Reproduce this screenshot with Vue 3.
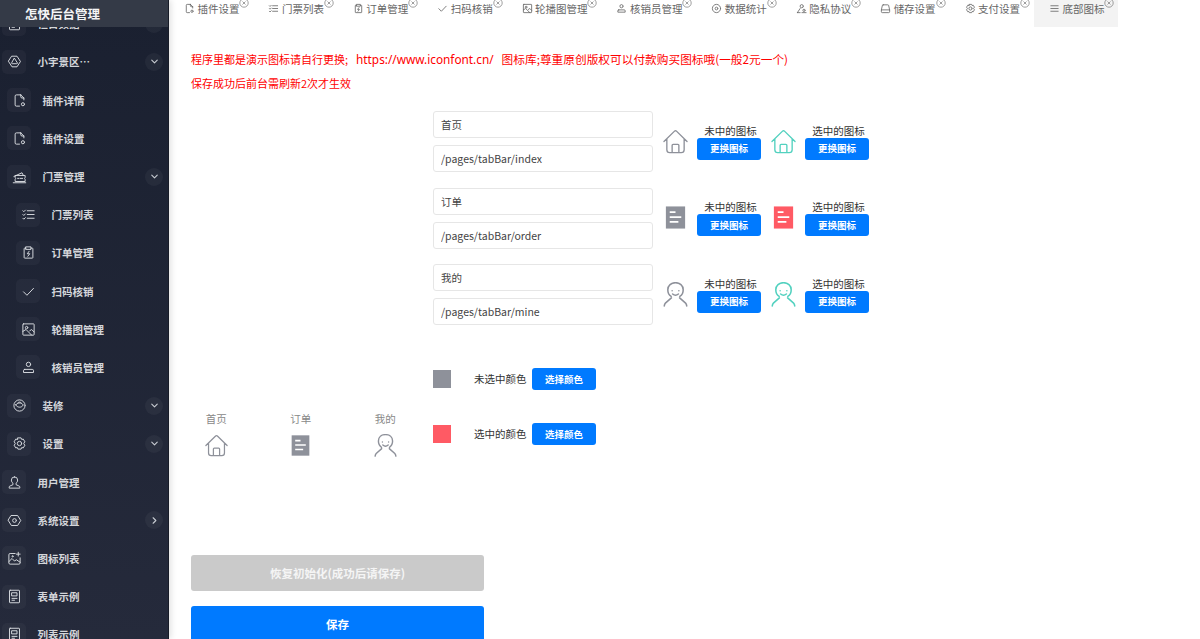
<script setup>
import { h } from 'vue'

const icons = {
  plugin: 'M14 3H7a2 2 0 0 0-2 2v14a2 2 0 0 0 2 2h5M14 3l5 5v3M14 3v3a2 2 0 0 0 2 2h3M20 18a2.5 2.5 0 1 1-5 0a2.5 2.5 0 1 1 5 0',
  hex: 'M8 3.5h8l5.5 8.5-5.5 8.5H8L2.500 12zM12 7l4.500 7a1 1 0 0 1-.8 1.500H8.300a1 1 0 0 1-.8-1.500z',
  ticket: 'M3 12l13-6 2 4M5 11v2.500a2 2 0 0 1 0 3V20h16v-3.500a2 2 0 0 1 0-3V11zM9 15h2M13 15h4M2 22h20',
  list: 'M10 6h11M10 12h11M10 18h11M3 6l1.500 1.500L7 5M3 12l1.500 1.500L7 11M3 18l1.500 1.500L7 17',
  clip: 'M8 5H6a1 1 0 0 0-1 1v14a1 1 0 0 0 1 1h12a1 1 0 0 0 1-1V6a1 1 0 0 0-1-1h-2M8 3h8v4H8zM13 10l-3 4h4l-3 4',
  check: 'M4 12.500l5.500 5.500L20 7',
  image: 'M4 3h16a1 1 0 0 1 1 1v16a1 1 0 0 1-1 1H4a1 1 0 0 1-1-1V4a1 1 0 0 1 1-1zM3 15l5-3 9 9M11 9a2 2 0 1 1-4 0a2 2 0 1 1 4 0M14 14l3-2 4 4',
  badge: 'M15.500 7a3.500 3.500 0 1 1-7 0a3.500 3.500 0 1 1 7 0M6 15h12a2 2 0 0 1 2 2v3H4v-3a2 2 0 0 1 2-2z',
  decor: 'M21 12a9 9 0 1 1-18 0a9 9 0 1 1 18 0M6 11c3-4 9-4 12 0c-2 5-10 5-12 0zM9 8c2-2 4-2 6 0',
  gear: 'M9.500 3h5l1 2.500 2.600-.5 2.500 4.300L18.900 11.500v1l1.700 2.200-2.500 4.300-2.600-.5-1 2.500h-5l-1-2.500-2.600.5-2.500-4.300 1.700-2.200v-1L3.400 9.300 5.900 5l2.600.5zM15.500 12a3.500 3.500 0 1 1-7 0a3.500 3.500 0 1 1 7 0',
  user: 'M12 3a5 5 0 0 0-5 5c0 2.500 1 4 2.500 5v2.500L5 17.500a2 2 0 0 0-1.500 2V21h17v-1.500a2 2 0 0 0-1.500-2l-4.500-2V13C16 12 17 10.500 17 8a5 5 0 0 0-5-5z',
  hexdot: 'M7 4h10l5 8-5 8H7l-5-8zM15 12a3 3 0 1 1-6 0a3 3 0 1 1 6 0',
  imgplus: 'M13 4H5a2 2 0 0 0-2 2v13a2 2 0 0 0 2 2h14a2 2 0 0 0 2-2v-8M3 17l5-5 4 4 3-2 6 4M18 2v6M15 5h6M10 8.500a1 1 0 1 1-2 0a1 1 0 1 1 2 0',
  form: 'M5 2h14a1 1 0 0 1 1 1v18a1 1 0 0 1-1 1H5a1 1 0 0 1-1-1V3a1 1 0 0 1 1-1zM8 6h8v5H8zM8 15h8M8 18h4',
  dot: 'M21 12a9 9 0 1 1-18 0a9 9 0 1 1 18 0M15 12a3 3 0 1 1-6 0a3 3 0 1 1 6 0',
  people: 'M16 7a3.500 3.500 0 1 1-7 0a3.500 3.500 0 1 1 7 0M9 12l-6 9M3 21h6M20 16a2.500 2.500 0 1 1-5 0a2.500 2.500 0 1 1 5 0M13 21h9',
  drive: 'M7 4h10a2 2 0 0 1 2 2l2 9v4a2 2 0 0 1-2 2H5a2 2 0 0 1-2-2v-4l2-9a2 2 0 0 1 2-2zM3 15h18',
  menu: 'M4 6h16M4 12h16M4 18h16'
}

const Glyph = (props) =>
  h('svg', { viewBox: '0 0 24 24', class: 'glyph' }, [h('path', { d: icons[props.name] })])

const TabBarIcon = (props) => {
  const stroke = { fill: 'none', stroke: props.color, 'stroke-width': 1.4, 'stroke-linecap': 'round', 'stroke-linejoin': 'round' }
  if (props.kind === 'home') {
    return h('svg', { viewBox: '0 0 26 26', class: 'brand' }, [
      h('path', { ...stroke, d: 'M1 13L12 2.200a1.400 1.400 0 0 1 2 0L25 13M4 10.500V21.500a3 3 0 0 0 3 3H19a3 3 0 0 0 3-3V10.500M9.500 24.500V17a1 1 0 0 1 1-1h5a1 1 0 0 1 1 1v7.500' })
    ])
  }
  if (props.kind === 'doc') {
    return h('svg', { viewBox: '0 0 26 26', class: 'brand' }, [
      h('rect', { x: 3, y: 1.500, width: 20, height: 23, fill: props.color }),
      h('path', { d: 'M7 7.500h6M7 12.500h12M7 17.500h9', stroke: '#fff', 'stroke-width': 1.800, fill: 'none' })
    ])
  }
  return h('svg', { viewBox: '0 0 26 26', class: 'brand' }, [
    h('path', { ...stroke, 'stroke-width': 1.600, d: 'M8.500 15C6 13.500 5 11 5 8C5 3.500 8.500 .7 13 .7C17.500 .7 21 3.500 21 8C21 11 20 13.500 17.500 15M8.700 16.500L2.500 22Q1.500 23 1.300 25M17.300 16.500L23.500 22Q24.500 23 24.700 25M10 12.500Q13 15 16 12.500' }),
    h('circle', { cx: 9.500, cy: 9, r: 0.800, fill: props.color }),
    h('circle', { cx: 16.500, cy: 9, r: 0.800, fill: props.color })
  ])
}

const navItems = [
  { label: '栏目数据', icon: 'form', level: 0, arrow: 'down' },
  { label: '小宇景区…', icon: 'hex', level: 0, arrow: 'down' },
  { label: '插件详情', icon: 'plugin', level: 1 },
  { label: '插件设置', icon: 'plugin', level: 1 },
  { label: '门票管理', icon: 'ticket', level: 1, arrow: 'down' },
  { label: '门票列表', icon: 'list', level: 2 },
  { label: '订单管理', icon: 'clip', level: 2 },
  { label: '扫码核销', icon: 'check', level: 2 },
  { label: '轮播图管理', icon: 'image', level: 2 },
  { label: '核销员管理', icon: 'badge', level: 2 },
  { label: '装修', icon: 'decor', level: 1, arrow: 'down' },
  { label: '设置', icon: 'gear', level: 1, arrow: 'down' },
  { label: '用户管理', icon: 'user', level: 0 },
  { label: '系统设置', icon: 'hexdot', level: 0, arrow: 'right' },
  { label: '图标列表', icon: 'imgplus', level: 0 },
  { label: '表单示例', icon: 'form', level: 0 },
  { label: '列表示例', icon: 'form', level: 0 }
]

const tabs = [
  { label: '插件设置', icon: 'plugin' },
  { label: '门票列表', icon: 'list' },
  { label: '订单管理', icon: 'clip' },
  { label: '扫码核销', icon: 'check' },
  { label: '轮播图管理', icon: 'image' },
  { label: '核销员管理', icon: 'badge' },
  { label: '数据统计', icon: 'dot' },
  { label: '隐私协议', icon: 'people' },
  { label: '储存设置', icon: 'drive' },
  { label: '支付设置', icon: 'gear' },
  { label: '底部图标', icon: 'menu', active: true }
]

const GREY = '#8e919a'
const TEAL = '#52d1bf'
const RED = '#ff5a64'

const groups = [
  { name: '首页', path: '/pages/tabBar/index', kind: 'home', on: TEAL },
  { name: '订单', path: '/pages/tabBar/order', kind: 'doc', on: RED },
  { name: '我的', path: '/pages/tabBar/mine', kind: 'person', on: TEAL }
]
</script>

<template>
  <div class="page">
    <aside class="sidebar">
      <div class="brand-bar">怎快后台管理</div>
      <nav class="nav">
        <div v-for="item in navItems" :key="item.label" class="nav-row" :class="'level-' + item.level">
          <span class="nav-icon"><Glyph :name="item.icon" /></span>
          <span class="nav-label">{{ item.label }}</span>
          <span v-if="item.arrow" class="nav-arrow">
            <svg viewBox="0 0 12 12" :class="{ turned: item.arrow === 'right' }"><path d="M3 4.500l3 3 3-3" /></svg>
          </span>
        </div>
      </nav>
    </aside>

    <main class="main">
      <div class="tabs">
        <div v-for="tab in tabs" :key="tab.label" class="tab" :class="{ active: tab.active }">
          <Glyph :name="tab.icon" class="tab-icon" />
          <span>{{ tab.label }}</span>
          <svg class="tab-close" viewBox="0 0 10 10">
            <circle cx="5" cy="5" r="4.200" />
            <path d="M3.500 3.500l3 3M6.500 3.500l-3 3" />
          </svg>
        </div>
      </div>

      <div class="content">
        <p class="note">程序里都是演示图标请自行更换;<span class="url">https://www.iconfont.cn/</span><span class="tail">图标库;尊重原创版权可以付款购买图标哦(一般2元一个)</span></p>
        <p class="note">保存成功后前台需刷新2次才生效</p>

        <div class="workspace">
          <div class="preview">
            <div v-for="g in groups" :key="g.name" class="preview-item">
              <span>{{ g.name }}</span>
              <TabBarIcon :kind="g.kind" :color="GREY" />
            </div>
          </div>

          <div class="editor">
            <div v-for="g in groups" :key="g.path" class="group">
              <div class="fields">
                <input class="field" :value="g.name" readonly />
                <input class="field" :value="g.path" readonly />
              </div>
              <div class="icon-slot">
                <TabBarIcon :kind="g.kind" :color="GREY" />
                <div class="slot-side">
                  <span>未中的图标</span>
                  <button class="btn-small">更换图标</button>
                </div>
              </div>
              <div class="icon-slot">
                <TabBarIcon :kind="g.kind" :color="g.on" />
                <div class="slot-side">
                  <span>选中的图标</span>
                  <button class="btn-small">更换图标</button>
                </div>
              </div>
            </div>

            <div class="colors">
              <div class="color-row">
                <i class="swatch swatch-off"></i>
                <span>未选中颜色</span>
                <button class="btn-small">选择颜色</button>
              </div>
              <div class="color-row">
                <i class="swatch swatch-on"></i>
                <span>选中的颜色</span>
                <button class="btn-small">选择颜色</button>
              </div>
            </div>
          </div>
        </div>

        <div class="actions">
          <button class="btn-wide btn-reset">恢复初始化(成功后请保存)</button>
          <button class="btn-wide btn-save">保存</button>
        </div>
      </div>
    </main>
  </div>
</template>

<style>
html, body { margin: 0; background: #fff; overflow: hidden; }
</style>

<style scoped>
.page {
  display: flex;
  width: 1200px;
  height: 639px;
  overflow: hidden;
  font-family: "Noto Sans CJK SC", "Noto Sans", sans-serif;
  font-size: 10.5px;
  color: #333;
  background: #fff;
}
.sidebar {
  position: relative;
  flex: none;
  width: 168px;
  height: 639px;
  overflow: hidden;
  border-right: 1px solid #181c28;
  background: linear-gradient(180deg, #1a2030 0%, #252a3b 100%);
  box-shadow: 2px 0 6px rgba(0, 0, 0, .12);
  z-index: 1;
}
.brand-bar {
  position: absolute;
  top: 0;
  left: 0;
  right: 0;
  height: 27px;
  padding-left: 25px;
  line-height: 27px;
  font-size: 12.500px;
  font-weight: 700;
  color: #f4f5f6;
  background: #343a47;
  z-index: 1;
}
.nav { padding-top: 4.700px; }
.nav-row {
  display: flex;
  align-items: center;
  height: 38.200px;
  padding-right: 5px;
  color: #d4d6da;
  font-weight: 700;
}
.level-0 { padding-left: 2px; }
.level-1 { padding-left: 7px; }
.level-2 { padding-left: 16px; }
.nav-icon {
  flex: none;
  display: flex;
  align-items: center;
  justify-content: center;
  width: 24px;
  height: 24px;
  margin-right: 11.500px;
  border-radius: 5px;
  background: rgba(255, 255, 255, .035);
}
.nav-label { flex: 1; white-space: nowrap; }
.nav-arrow {
  flex: none;
  display: flex;
  align-items: center;
  justify-content: center;
  width: 18px;
  height: 18px;
  border-radius: 50%;
  background: rgba(255, 255, 255, .045);
}
.nav-arrow svg { width: 11px; height: 11px; }
.nav-arrow svg.turned { transform: rotate(-90deg); }
.nav-arrow path { fill: none; stroke: #c8ccd2; stroke-width: 1.200; stroke-linecap: round; stroke-linejoin: round; }
.glyph {
  width: 15px;
  height: 15px;
  fill: none;
  stroke: #dcdfe3;
  stroke-width: 1.500;
  stroke-linecap: round;
  stroke-linejoin: round;
}

.main { flex: 1; min-width: 0; }
.tabs { display: flex; height: 27px; }
.tab {
  position: relative;
  flex: none;
  display: flex;
  align-items: center;
  gap: 2.500px;
  box-sizing: border-box;
  height: 27px;
  padding: 0 0 10px 15px;
  width: 84.400px;
  color: #666;
  white-space: nowrap;
}
.tab:nth-child(5), .tab:nth-child(6) { width: 94.900px; }
.tab.active { background: #f3f3f3; }
.tab .tab-icon { width: 11px; height: 11px; stroke: #666; stroke-width: 1.800; }
.tab-close {
  position: absolute;
  top: -2px;
  right: 4px;
  width: 10px;
  height: 10px;
  fill: none;
  stroke: #777;
  stroke-width: .7;
}

.content { padding-left: 22px; }
.note {
  height: 24px;
  margin: 0;
  line-height: 24px;
  font-size: 11px;
  color: #f00;
  white-space: nowrap;
}
.note:first-child { margin-top: 20px; }
.url {
  margin: 0 8px;
  font-family: "Noto Sans", sans-serif;
  font-size: 11.800px;
}
.tail { font-size: 11.700px; }
.workspace {
  display: flex;
  align-items: flex-end;
  margin-top: 16px;
}
.preview {
  flex: none;
  display: flex;
  width: 259px;
  margin-left: -17px;
  margin-bottom: -12px;
}
.preview-item {
  flex: none;
  display: flex;
  flex-direction: column;
  align-items: center;
  width: 84.500px;
  gap: 8px;
  color: #888;
}
.preview-item .brand { width: 23px; height: 23px; }
.editor { flex: none; }
.group { display: flex; height: 61.500px; margin-bottom: 15px; }
.fields { display: flex; flex-direction: column; gap: 7px; width: 220px; }
.field {
  box-sizing: border-box;
  width: 220px;
  height: 27px;
  padding: 0 7px;
  border: 1px solid #e6e6e6;
  border-radius: 3px;
  outline: none;
  font: inherit;
  font-size: 10.500px;
  color: #444;
  background: #fff;
}
.icon-slot {
  display: flex;
  align-items: center;
  height: 46px;
  margin: 7px 0 0 10px;
}
.brand { flex: none; width: 25px; height: 25px; }
.slot-side {
  display: flex;
  flex-direction: column;
  align-items: center;
  margin-left: 9px;
  width: 64px;
  line-height: 15px;
  color: #333;
}
.slot-side span { padding-left: 3px; }
.btn-small {
  display: block;
  width: 64px;
  height: 22px;
  padding: 0;
  border: 0;
  border-radius: 3px;
  background: #007aff;
  color: #fff;
  font: inherit;
  font-size: 9.500px;
  font-weight: 700;
}
.colors { display: flex; flex-direction: column; gap: 33px; margin-top: 42px; }
.color-row { display: flex; align-items: center; height: 22px; }
.swatch { flex: none; width: 18px; height: 18px; margin-right: 23px; }
.swatch-off { background: #8e919a; }
.swatch-on { background: #ff5a64; }
.color-row span { width: 58px; white-space: nowrap; }
.actions {
  display: flex;
  flex-direction: column;
  gap: 15px;
  width: 293px;
  margin-top: 110px;
}
.btn-wide {
  flex: none;
  width: 293px;
  height: 36px;
  border: 0;
  border-radius: 3px;
  color: #fff;
  font: inherit;
  font-size: 11.500px;
}
.btn-reset { background: #cacaca; color: #f5f5f5; font-weight: 700; }
.btn-save { background: #007aff; font-weight: 700; }
</style>
